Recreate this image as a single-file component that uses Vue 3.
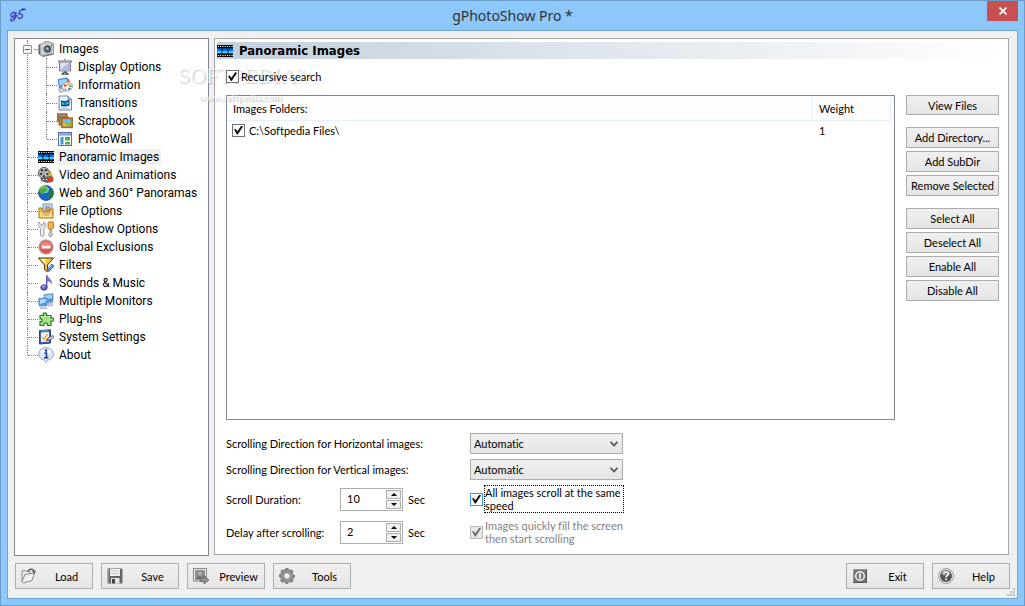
<script setup>
import { ref } from 'vue'

const children = [
  { icon: 'screen', label: 'Display Options' },
  { icon: 'palette', label: 'Information' },
  { icon: 'transitions', label: 'Transitions' },
  { icon: 'scrapbook', label: 'Scrapbook' },
  { icon: 'photowall', label: 'PhotoWall' }
]

const sections = [
  { icon: 'camera', label: 'Images', children },
  { icon: 'film', label: 'Panoramic Images', selected: true },
  { icon: 'reel', label: 'Video and Animations' },
  { icon: 'globe', label: 'Web and 360° Panoramas' },
  { icon: 'folder', label: 'File Options' },
  { icon: 'wrench', label: 'Slideshow Options' },
  { icon: 'stop', label: 'Global Exclusions' },
  { icon: 'funnel', label: 'Filters' },
  { icon: 'note', label: 'Sounds & Music' },
  { icon: 'monitors', label: 'Multiple Monitors' },
  { icon: 'puzzle', label: 'Plug-Ins' },
  { icon: 'settings', label: 'System Settings' },
  { icon: 'about', label: 'About' }
]

const actionGroups = [
  ['View Files'],
  ['Add Directory...', 'Add SubDir', 'Remove Selected'],
  ['Select All', 'Deselect All', 'Enable All', 'Disable All']
]

const fileButtons = [
  { icon: 'load', label: 'Load' },
  { icon: 'save', label: 'Save' },
  { icon: 'preview', label: 'Preview' },
  { icon: 'gear', label: 'Tools' }
]
const exitButtons = [
  { icon: 'exit', label: 'Exit' },
  { icon: 'help', label: 'Help' }
]

const folders = ref([{ path: 'C:\\Softpedia Files\\', weight: 1, on: true }])
const recursive = ref(true)
const sameSpeed = ref(true)
const fill = ref(true)
const duration = ref(10)
const delay = ref(2)

const icons = {
  camera: `<path d="M0.5 4 L2 3 L2.5 14.5 L0.5 12.500Z" fill="#555b63"/><path d="M2 3.500 L5 2.500 L6.500 0.800 L11 0.500 L12 2 L15.500 2.200 L15.500 12.500 L4 15 L2 14Z" fill="#c9ccd1" stroke="#7a7f86" stroke-width=".8"/><path d="M4 15 L15.500 12.500 V13.700 L5 16Z" fill="#777"/><path d="M3 5 L15 3.500" stroke="#f4f5f7"/><circle cx="9.500" cy="8" r="4.200" fill="#8d929a"/><circle cx="9.500" cy="8" r="3.200" fill="#3d434d"/><circle cx="9.500" cy="8" r="1.900" fill="#77879c"/><circle cx="8.700" cy="7.200" r=".8" fill="#e8eef8"/><rect x="13" y="3.500" width="1.500" height="1.500" fill="#596070"/>`,
  screen: `<path d="M8 12 V14 M4.500 15.500 L8 13 L11.500 15.500" stroke="#555" stroke-width="1.600" fill="none"/><path d="M2.500 2.500 H13.500 V12 H2.500Z" fill="#dcdcf4" stroke="#77779b"/><path d="M3 11 L13 3 V11.500 H3Z" fill="#b7b8df"/><rect x="1" y="1" width="14" height="2.400" rx="1" fill="#8b8b93"/><path d="M2 1.700 H14" stroke="#dcdce2" stroke-width=".7"/><path d="M7 .2 H9" stroke="#666"/><path d="M6 15.400 H10" stroke="#666"/>`,
  palette: `<path d="M1 2.500 L10 .8 L12.500 9 L2.500 11Z" fill="#58a5ea" stroke="#3573ba" stroke-width=".8"/><path d="M2 3.300 L9.300 1.900 L10 5 L3 9Z" fill="#9bd4fb"/><path d="M1.500 12 L8 11 L9 14 L3 15.500Z" fill="#ced3da" stroke="#8b939f" stroke-width=".7"/><path d="M5 11 C4 7 9 4 13 5.500 C17 7 16 12 12 14 C10 15 9 13.500 9.500 12.500 C10 11.500 6 13.500 5 11Z" fill="#f4f1ee" stroke="#777d8a" stroke-width=".7"/><circle cx="8" cy="8.500" r="1.200" fill="#e8362b"/><circle cx="11" cy="7.200" r="1.200" fill="#f39b20"/><circle cx="13.500" cy="9" r="1.200" fill="#48a846"/><circle cx="12.300" cy="11.800" r="1.100" fill="#335bcb"/><path d="M11 2 L12.500 4.500" stroke="#d93d36" stroke-width="1.300"/>`,
  transitions: `<path d="M2 1 H11 L14.500 4.500 V15 H2Z" fill="#e9f2fc" stroke="#7285a5"/><path d="M11 1 V4.500 H14.500Z" fill="#a9bdd9" stroke="#7285a5" stroke-width=".7"/><path d="M4 5.500 L8 6.200 L12.500 4.800 V10.500 L8 11.500 L4 11Z" fill="#113d6d"/><path d="M4.500 7 L7.500 7.500 V10 L4.500 9.500ZM8.500 7.300 L11.700 6.400 V9 L8.500 10Z" fill="#2abaf0"/><path d="M4 13 H12" stroke="#aac0dd"/>`,
  scrapbook: `<rect x=".8" y="1" width="9" height="7" fill="#55a6dc" stroke="#b5611d" stroke-width="1.500"/><rect x="2" y="4" width="9" height="8" fill="#88a84c" stroke="#a65818"/><rect x="5" y="5.500" width="10" height="8.500" fill="#65bdf0" stroke="#c8782a" stroke-width="1.700"/><path d="M6 11 L9 8.500 L11 10.500 L14 8 V13 H6Z" fill="#97bc31"/><path d="M6 11 L8 11 L11 13 H6Z" fill="#f3c431"/><path d="M4.200 4.700 H15.800 V14.800 H4.200Z" fill="none" stroke="#6f3910" stroke-width=".5"/>`,
  photowall: `<rect x="1.500" y="1.500" width="13" height="13" fill="#f5f8fd" stroke="#5772a3"/><rect x="2" y="2" width="12" height="2.500" fill="#719dd6"/><path d="M2.500 2.800 H13" stroke="#b7d1f2" stroke-width=".7"/><rect x="3.500" y="6" width="3" height="7.500" fill="#459ac8"/><rect x="8" y="6" width="5" height="3.500" fill="#57ae49"/><rect x="8" y="11" width="5" height="2.500" fill="#57ae49"/>`,
  film: `<rect x="0" y="2" width="16" height="12" fill="#050505"/><path d="M.8 3.500 H16 M.8 12.500 H16" stroke="#fff" stroke-width="1.200" stroke-dasharray="1.100 1.200"/><rect x="0" y="5.300" width="4.500" height="5.500" fill="#0873e6"/><rect x="5.500" y="5.300" width="5" height="5.500" fill="#0873e6"/><rect x="11.500" y="5.300" width="4.500" height="5.500" fill="#0873e6"/><path d="M0 9 H4.500 M5.500 9 H10.500 M11.500 9 H16" stroke="#49c2ff" stroke-width="2.200"/><path d="M0 5.700 H4.500 M5.500 5.700 H10.500 M11.500 5.700 H16" stroke="#09439e"/>`,
  reel: `<circle cx="6" cy="6" r="5.500" fill="#d2d2d2" stroke="#4c4c4c"/><g fill="#3d3d3d"><circle cx="4" cy="3.300" r="1.400"/><circle cx="8" cy="3.300" r="1.400"/><circle cx="3" cy="7" r="1.400"/><circle cx="6" cy="9.300" r="1.400"/><circle cx="9.300" cy="7" r="1.300"/><circle cx="6" cy="6" r=".8"/></g><path d="M3 11 C6 13 9 9 12 10 L15 14 C11 16 7 16 3 13Z" fill="#6d6d6d" stroke="#333" stroke-width=".6"/><path d="M5 13 L6 12 M8 13 L9 12" stroke="#eee"/><path d="M10 8 L12 4 L14 9 L11 11Z" fill="#f1c32a" stroke="#8c6717" stroke-width=".6"/><circle cx="12.500" cy="12" r="3" fill="#dd3a24"/><path d="M10.500 9 H14 V11 H10Z" fill="#39973b"/>`,
  globe: `<circle cx="8" cy="8" r="7.500" fill="#1765c5" stroke="#154684" stroke-width=".7"/><ellipse cx="6.500" cy="4.800" rx="5" ry="3.500" fill="#75bdf5"/><path d="M1 5 C3 1 8 0 9.500 1.500 L8 4 L10 5.500 L6.500 7 L5 9.500 L3.500 9 L2 8Z" fill="#4dab37"/><path d="M11 4 C13 2.500 15 6 15.300 8 C15 12 13 14 11.500 14 L10.500 11 L12.500 9 L10.500 7Z" fill="#287e25"/><path d="M3 4 C4.500 2 7 1.500 8 2" stroke="#b5e58b" fill="none"/>`,
  folder: `<path d="M5 1 H14 V9 H5Z" fill="#fff" stroke="#6483a5"/><path d="M6.500 2.500 H12.500 V8 H6.500Z" fill="#66b3f1"/><circle cx="9.500" cy="5" r="1.700" fill="#ed854b"/><path d="M1 5 H4 V8 H12 V6 H15 V15 H1Z" fill="#f4c755" stroke="#af7415"/><path d="M2.500 10 H13.500 V14 H2.500Z" fill="#ffe69c"/><path d="M5 9.500 H11 V12 H5Z" fill="#fff5ce" stroke="#bf8926" stroke-width=".8"/><path d="M6.500 11 H9.500" stroke="#986821" stroke-width=".7"/>`,
  wrench: `<path d="M1 1 L3 4 H5 L6 1 C9 3 8 6 6 7.500 V14 C5.500 16 3 16 2.500 14 V7.500 C0 6 -1 3 1 1Z" fill="#e0e0e0" stroke="#8c8c8c" stroke-width=".8"/><path d="M4 7 V14" stroke="#fff"/><path d="M10 1.500 C10 .5 15.500 .5 15.500 1.500 V7 L13.500 8.500 H11.500 L10 7Z" fill="#f2a33f" stroke="#bd6b1d" stroke-width=".8"/><path d="M11.500 2 V7 M13.500 2 V7" stroke="#ffd190" stroke-width=".7"/><path d="M12 8.500 H13.500 V12 L14.500 13 L13.500 15.500 H11.500 L10.500 13 L12 12Z" fill="#d7d7d7" stroke="#777" stroke-width=".7"/>`,
  stop: `<circle cx="8" cy="8" r="7" fill="#e2554c" stroke="#b9b4b7" stroke-width="1.400"/><circle cx="8" cy="8" r="6.300" fill="none" stroke="#d0554c" stroke-width=".7"/><path d="M2.500 7 C3 1 13 1 13.500 7Z" fill="#f0837b"/><rect x="3.500" y="6.700" width="9" height="2.800" rx=".5" fill="#fff"/>`,
  funnel: `<path d="M.5 1 H15.500 L9.500 8 V14.500 L6.500 12.500 V8Z" fill="#f6c63b" stroke="#3d3213"/><path d="M2.500 2 H8 L7.500 7Z" fill="#fff1a3"/><path d="M9 12 L14 7 L16 9 L11 14.500Z" fill="#3e8fe0" stroke="#214d8a" stroke-width=".7"/><path d="M9 12 L11 14.500 L8 15.500Z" fill="#e94532"/><path d="M10.500 11.500 L14 8" stroke="#c1e2ff"/>`,
  note: `<path d="M8.700 2 V12" stroke="#4848ae" stroke-width="1.300"/><path d="M8 .5 H9.500 C10 4 14 4 13.500 8.500 C12.500 6.300 10 6 9.500 6Z" fill="#7776d4" stroke="#5050b0" stroke-width=".5"/><ellipse cx="6" cy="12.500" rx="3.300" ry="2.800" fill="#5c5bc4" stroke="#39398f" stroke-width=".7"/><ellipse cx="5.500" cy="11.500" rx="1.800" ry=".9" fill="#adb0f1"/>`,
  monitors: `<path d="M6 1.500 L15 .8 V9 L7 10Z" fill="#4995e6" stroke="#8095b5" stroke-width=".9"/><path d="M7 2.500 L14 1.800 V5 L7 7Z" fill="#a3d4ff"/><path d="M10 10 L13.500 9.500 L15 12.500 L10 13Z" fill="#cbd0dc" stroke="#8d96ac" stroke-width=".6"/><path d="M.8 5.500 L9 4.700 V12.500 L1 13Z" fill="#4c9be9" stroke="#788caf" stroke-width=".9"/><path d="M2 6.500 L8 6 V9 L2 11Z" fill="#aedcff"/><path d="M3.500 13 H7 L9 15.500 H2Z" fill="#dce0e9" stroke="#8a94aa" stroke-width=".6"/>`,
  puzzle: `<path d="M2 4.500 H5.500 C3.500 1 10 1 8.500 4.500 H13 V7 C16.500 5.500 16.500 11.500 13 10 V14.500 H9.500 C10.500 11 5 11 6 14.500 H2 V10.500 C5 11.500 5 7 2 8Z" fill="#a5e287" stroke="#27801e" stroke-width="1.200"/><path d="M3 5.500 H8 M9.500 5.500 H12" stroke="#d7f8c0"/>`,
  settings: `<path d="M1.500 1.500 L12.500 .8 V14 L1.500 15Z" fill="#3468ab" stroke="#214575"/><path d="M3 3.500 L11 3 V12.500 L3 13Z" fill="#f4f6fb"/><path d="M3.500 1.800 H10" stroke="#79a8dd"/><path d="M4.500 8 L6 10.500 L9.500 5" fill="none" stroke="#e5b83d" stroke-width="1.500"/><path d="M8 11 L11 8 L15 6.500 L15.500 9 L11 11.500Z" fill="#9ba6b9" stroke="#4a566d" stroke-width=".7"/><path d="M8 11.800 L10.500 9.500" stroke="#d34b32" stroke-width="1.200"/><path d="M11 9.800 L15 8" stroke="#fff" stroke-width=".7"/>`,
  about: `<path d="M8 .7 C17 .7 17.500 12 10.500 12.800 L8 15.500 L6 12.800 C-1.500 12 -1 .7 8 .7Z" fill="#dce8f5" stroke="#7695bb" stroke-width=".8"/><path d="M2.500 5 C4 1 12 1 13.500 5 C10 7 6 7 2.500 5Z" fill="#fff"/><circle cx="8" cy="3.500" r="1.300" fill="#123b8c"/><path d="M6.300 6 H8.500 V10.500 M6 10.800 H10.300" fill="none" stroke="#123b8c" stroke-width="1.500"/>`,
  load: `<path d="M1 13.500 V3 L3 2 L5 3.500 H9 V6" fill="#e8e8e8" stroke="#888"/><path d="M1 13.500 L4 6.500 L13.500 5 L11 12.500 L2.500 15Z" fill="#f0f0f0" stroke="#888"/><path d="M7 3 C9 .5 12 1 13 3" fill="none" stroke="#555" stroke-width="1.400"/><path d="M11 3 L15 2.500 L13.300 6Z" fill="#555"/>`,
  save: `<path d="M.5 .5 H14.500 L15.500 1.500 V15.500 H.5Z" fill="#666"/><rect x="3" y="1" width="10" height="7" fill="#f0f0f0"/><path d="M4 3 H12 M4 5.500 H12" stroke="#c5c5c5"/><rect x="4" y="10" width="8.500" height="5.500" fill="#e5e5e5"/><rect x="5" y="11" width="3" height="4.500" fill="#444"/><path d="M1.500 1 V15" stroke="#999"/>`,
  preview: `<rect x=".5" y=".5" width="13" height="12.500" fill="#e8e8e8" stroke="#8b8b8b"/><rect x="2" y="2" width="10" height="9.500" fill="#969696"/><circle cx="7" cy="5.500" r="3" fill="#ababab" stroke="#777"/><path d="M2 11 L5 8 L9 10 L12 7 V11.500 H2Z" fill="#707070"/><path d="M7 10 H11 V7.500 L16 12 L11 16 V13.500 H7Z" fill="#909090" stroke="#555" stroke-width=".7"/>`,
  gear: `<path d="M6.500 0 H9.500 L10 2 L12.500 1.300 L14.500 3.500 L13.700 6 L16 7 V9.500 L14 10.500 L14.500 12.800 L12.500 14.800 L10 14 L9 16 H6.500 L5.500 14 L3 14.700 L1.200 12.500 L2 10.300 L0 9 V6.500 L2 5.500 L1.500 3 L3.500 1.300 L5.500 2Z" fill="#858585"/><circle cx="8" cy="8" r="4.500" fill="none" stroke="#aaa"/><circle cx="8" cy="8" r="3.300" fill="#f0f0f0" stroke="#6f6f6f" stroke-width=".8"/>`,
  exit: `<rect x="1" y="1" width="14" height="14" fill="#747474"/><path d="M1.500 14 V1.500 H14" fill="none" stroke="#999"/><path d="M1 14.500 H14.500 V2" fill="none" stroke="#555"/><circle cx="8" cy="8" r="4.300" fill="none" stroke="#f5f5f5" stroke-width="1.500"/><path d="M8 5.500 V10.500" stroke="#fff" stroke-width="1.700"/>`,
  help: `<circle cx="8" cy="8" r="7.500" fill="#eee" stroke="#888" stroke-width=".8"/><circle cx="8" cy="8" r="6" fill="#555"/><path d="M3 6 C4 1.500 12 1.500 13 6 C10 8 6 8 3 6Z" fill="#828282"/><path d="M5.700 6.300 C5.700 3 10.700 3.300 10.300 6 C10 7.700 8 7.300 8 9.500" fill="none" stroke="#fff" stroke-width="1.600"/><rect x="7.200" y="10.600" width="1.700" height="1.700" fill="#fff"/>`
}
</script>

<template>
  <div class="window">
    <header class="titlebar">
      <svg class="logo" viewBox="0 0 18 16" aria-hidden="true">
        <path d="M7 6 C4 4 0 8 2.500 9.500 C5 10 6 7 7 6 C7 9 6 14 3 14 C1 14 1 12 3.500 11.200 L9 8.500 M16.500 2.500 L11 3.500 L10 7 C14 6 14.500 10 12 11 C10.500 12 8.500 11 9.500 10 M12 3.500 C13.500 1.500 15 1.500 16.500 3" fill="none" stroke="#3b37b5" stroke-width="1.200" />
      </svg>
      <h1>gPhotoShow Pro *</h1>
      <button class="close" aria-label="Close">
        <svg viewBox="0 0 8 8"><path d="M.5 .5 L7.500 7.500 M7.500 .5 L.5 7.500" stroke="#fff" stroke-width="1.700" /></svg>
      </button>
    </header>

    <div class="client">
      <div class="body">
        <nav class="tree">
          <ul class="roots">
            <li v-for="s in sections" :key="s.label">
              <a href="#" class="node" :class="{ parent: s.children }">
                <span v-if="s.children" class="expander"></span>
                <svg class="icon" viewBox="0 0 16 16" aria-hidden="true" v-html="icons[s.icon]"></svg>
                <span class="text" :class="{ selected: s.selected }">{{ s.label }}</span>
              </a>
              <ul v-if="s.children" class="leaves">
                <li v-for="c in s.children" :key="c.label">
                  <a href="#" class="node">
                    <svg class="icon" viewBox="0 0 16 16" aria-hidden="true" v-html="icons[c.icon]"></svg>
                    <span class="text">{{ c.label }}</span>
                  </a>
                </li>
              </ul>
            </li>
          </ul>
        </nav>

        <main class="panel">
          <h2 class="heading">
            <svg class="icon" viewBox="0 0 16 16" aria-hidden="true" v-html="icons.film"></svg>
            Panoramic Images
          </h2>
          <div class="content">
            <label class="check recursive"><input v-model="recursive" type="checkbox" />Recursive search</label>
            <div class="upper">
              <div class="list">
                <table>
                  <thead>
                    <tr><th>Images Folders:</th><th class="weight">Weight</th></tr>
                  </thead>
                  <tbody>
                    <tr v-for="f in folders" :key="f.path">
                      <td><label class="check"><input v-model="f.on" type="checkbox" />{{ f.path }}</label></td>
                      <td class="weight">{{ f.weight }}</td>
                    </tr>
                  </tbody>
                </table>
              </div>
              <div class="actions">
                <div v-for="(g, i) in actionGroups" :key="i" class="group">
                  <button v-for="b in g" :key="b" class="btn">{{ b }}</button>
                </div>
              </div>
            </div>

            <form class="options" @submit.prevent>
              <label for="dir-h">Scrolling Direction for Horizontal images:</label>
              <div class="select">
                <select id="dir-h"><option>Automatic</option></select>
                <svg viewBox="0 0 8 6"><path d="M.5 .8 L4 4.500 L7.500 .8" fill="none" stroke="#555" stroke-width="1.800" /></svg>
              </div>
              <label for="dir-v">Scrolling Direction for Vertical images:</label>
              <div class="select">
                <select id="dir-v"><option>Automatic</option></select>
                <svg viewBox="0 0 8 6"><path d="M.5 .8 L4 4.500 L7.500 .8" fill="none" stroke="#555" stroke-width="1.800" /></svg>
              </div>
              <div class="row">
                <label for="duration">Scroll Duration:</label>
                <div class="spin">
                  <input id="duration" v-model="duration" type="text" />
                  <div class="steps">
                    <button aria-label="Increase duration" @click="duration++"><i class="up"></i></button>
                    <button aria-label="Decrease duration" @click="duration--"><i class="down"></i></button>
                  </div>
                </div>
                <span>Sec</span>
              </div>
              <label class="check wrap focus"><input v-model="sameSpeed" type="checkbox" /><span>All images scroll at the same speed</span></label>
              <div class="row">
                <label for="delay">Delay after scrolling:</label>
                <div class="spin">
                  <input id="delay" v-model="delay" type="text" />
                  <div class="steps">
                    <button aria-label="Increase delay" @click="delay++"><i class="up"></i></button>
                    <button aria-label="Decrease delay" @click="delay--"><i class="down"></i></button>
                  </div>
                </div>
                <span>Sec</span>
              </div>
              <label class="check wrap off"><input v-model="fill" type="checkbox" disabled /><span>Images quickly fill the screen then start scrolling</span></label>
            </form>
          </div>
        </main>
      </div>

      <footer class="footer">
        <button v-for="b in fileButtons" :key="b.label" class="btn big">
          <svg class="icon" viewBox="0 0 16 16" aria-hidden="true" v-html="icons[b.icon]"></svg>
          <span>{{ b.label }}</span>
        </button>
        <div class="spacer"></div>
        <button v-for="b in exitButtons" :key="b.label" class="btn big">
          <svg class="icon" viewBox="0 0 16 16" aria-hidden="true" v-html="icons[b.icon]"></svg>
          <span>{{ b.label }}</span>
        </button>
      </footer>
      <svg class="grip" viewBox="0 0 8 8" aria-hidden="true">
        <path d="M6 0h2v2h-2zM3 3h2v2h-2zM6 3h2v2h-2zM0 6h2v2h-2zM3 6h2v2h-2zM6 6h2v2h-2z" fill="#bcbcbc" />
      </svg>
    </div>

    <div class="watermark" aria-hidden="true">
      <div class="brand">SOFTPEDIA<sup>™</sup></div>
      <div class="site">www.softpedia.com</div>
    </div>
  </div>
</template>

<style>
body {
  margin: 0;
}
</style>

<style scoped>
* {
  box-sizing: border-box;
}
.window {
  position: relative;
  display: flex;
  flex-direction: column;
  min-height: 100vh;
  padding: 0 6px 6px;
  border: 1px solid #6b9bc8;
  background: #8ec8fa;
  color: #000;
  font: 11px/13px Lato, sans-serif;
  font-variant-ligatures: none;
}
button,
input,
select {
  font: inherit;
  font-variant-ligatures: none;
  color: inherit;
  margin: 0;
}
.icon {
  flex: none;
  width: 16px;
  height: 16px;
}
.titlebar {
  display: grid;
  grid-template-columns: 1fr auto 1fr;
  height: 29px;
}
.logo {
  width: 18px;
  height: 16px;
  margin: 6px 0 0 2px;
}
h1 {
  margin: 0;
  font: 14px/29px "Noto Sans", sans-serif;
  color: #2b3238;
}
.close {
  display: grid;
  place-items: center;
  justify-self: end;
  width: 31px;
  height: 20px;
  padding: 0;
  border: 0;
  background: #c75050;
}
.close svg {
  width: 8px;
  height: 8px;
}
.client {
  position: relative;
  flex: 1;
  display: flex;
  flex-direction: column;
  padding: 7px 7px 9px 6px;
  border: 1px solid #6ea4d3;
  background: #f0f0f0;
}
.body {
  flex: 1;
  display: flex;
  gap: 5px;
  padding-right: 1px;
}
.tree {
  width: 195px;
  padding: 1px 0;
  border: 1px solid #828790;
  background: #fff;
  font: 12px/16px Roboto, sans-serif;
}
ul {
  list-style: none;
  margin: 0;
  padding: 0;
}
.roots > li {
  margin-left: 12px;
  border-left: 1px dotted #808080;
}
.roots > li:last-child,
.leaves > li:last-child {
  height: 9px;
}
.node {
  display: flex;
  align-items: center;
  height: 18px;
  color: #000;
  text-decoration: none;
  white-space: nowrap;
}
.node::before {
  content: "";
  flex: none;
  width: 10px;
  border-top: 1px dotted #808080;
}
.parent::before {
  width: 4px;
}
.expander {
  order: -1;
  display: grid;
  place-items: center;
  width: 9px;
  height: 9px;
  margin-left: -5px;
  margin-right: 2px;
  border: 1px solid #919191;
  border-radius: 1px;
  background: #f5f5f5;
}
.expander::before {
  content: "";
  width: 5px;
  height: 1px;
  background: #3c5dab;
}
.leaves {
  margin-left: 18px;
  padding-bottom: 9px;
}
.leaves > li {
  border-left: 1px dotted #808080;
}
.text {
  margin-left: 3px;
  padding: 0 2px;
}
.selected {
  background: #f0f0f0;
}
.panel {
  flex: 1;
  display: flex;
  flex-direction: column;
  margin-bottom: 1px;
  padding: 3px 3px 3px 2px;
  border: 1px solid #a5a5a5;
  background: #fff;
}
.heading {
  display: flex;
  align-items: center;
  gap: 6px;
  height: 17px;
  margin: 0;
  background: linear-gradient(90deg, #c3cfdc, #fff);
  font: bold 13px/17px "DejaVu Sans Condensed", "DejaVu Sans", sans-serif;
}
.content {
  flex: 1;
  display: flex;
  flex-direction: column;
  padding: 11px 6px 5px 9px;
}
.check {
  display: flex;
  align-items: center;
  gap: 2px;
}
.check input {
  appearance: none;
  flex: none;
  display: grid;
  place-items: center;
  width: 13px;
  height: 13px;
  border: 1px solid #707070;
  background: #fff;
}
.check input:checked::before {
  content: "";
  width: 9px;
  height: 9px;
  background: #111;
  clip-path: polygon(0 45%, 18% 40%, 38% 65%, 82% 0, 100% 12%, 42% 100%, 32% 100%);
}
.recursive {
  position: relative;
  z-index: 1;
  align-self: flex-start;
  margin-bottom: 12px;
}
.upper {
  flex: 1;
  display: flex;
  gap: 11px;
}
.list {
  flex: 1;
  padding: 1px 3px 0 0;
  border: 1px solid #828790;
}
table {
  width: 100%;
  border-collapse: separate;
  border-spacing: 0;
}
th {
  height: 24px;
  padding: 0 6px;
  border-right: 1px solid #e5effb;
  border-bottom: 1px solid #e5effb;
  background: #fdfdfe;
  font-weight: normal;
  text-align: left;
}
.weight {
  width: 78px;
  padding: 0 6px;
}
td {
  height: 18px;
  padding: 0 5px;
}
td .check {
  gap: 4px;
}
.actions {
  display: flex;
  flex-direction: column;
  gap: 12px;
  width: 93px;
}
.group {
  display: flex;
  flex-direction: column;
  gap: 3px;
}
.btn {
  height: 21px;
  padding: 0;
  border: 1px solid #acacac;
  background: linear-gradient(#f0f0f0, #e5e5e5);
  white-space: nowrap;
}
.group:first-child .btn {
  height: 20px;
}
.options {
  display: grid;
  grid-template-columns: 244px 153px;
  grid-template-rows: 21px 21px 28px 28px;
  gap: 5px 0;
  align-items: center;
  margin-top: 13px;
}
.select {
  display: grid;
  align-items: center;
}
.select select,
.select svg {
  grid-area: 1 / 1;
}
.select select {
  appearance: none;
  height: 21px;
  padding: 0 3px;
  border: 1px solid #acacac;
  border-radius: 0;
  background: linear-gradient(#f0f0f0, #e5e5e5);
}
.select svg {
  justify-self: end;
  width: 8px;
  height: 6px;
  margin-right: 5px;
  pointer-events: none;
}
.row {
  display: flex;
  align-items: center;
}
.row label {
  width: 114px;
}
.spin {
  display: flex;
  width: 63px;
  height: 23px;
  margin-right: 5px;
  padding: 1px;
  border: 1px solid #abadb3;
}
.spin input {
  flex: 1;
  min-width: 0;
  padding: 0 5px 2px;
  border: 0;
  background: none;
}
.steps {
  display: flex;
  flex-direction: column;
  gap: 1px;
  width: 15px;
}
.steps button {
  flex: 1;
  display: grid;
  place-items: center;
  padding: 0;
  border: 1px solid #acacac;
  background: #f0f0f0;
}
.steps i {
  border: 3px solid transparent;
}
.steps .up {
  border-top: 0;
  border-bottom-color: #000;
}
.steps .down {
  border-bottom: 0;
  border-top-color: #000;
}
.wrap span {
  flex: 1;
}
.focus span {
  outline: 1px dotted #000;
}
.focus input {
  border-color: #3399ff;
}
.off {
  color: #838383;
}
.check.off input {
  border-color: #bcbcbc;
  background: #e6e6e6;
}
.check.off input::before {
  background: #707070;
}
.footer {
  display: flex;
  gap: 8px;
  margin-top: 7px;
  padding-left: 1px;
}
.spacer {
  flex: 1;
}
.big {
  display: flex;
  align-items: center;
  width: 78px;
  height: 26px;
  padding: 0 5px;
}
.big span {
  flex: 1;
  padding-left: 9px;
  text-align: center;
}
.grip {
  position: absolute;
  right: 2px;
  bottom: 2px;
  width: 8px;
  height: 8px;
}
.watermark {
  position: absolute;
  left: 177px;
  top: 60px;
  color: rgba(255, 255, 255, 0.7);
  text-shadow: 1px 1px 1px rgba(120, 120, 120, 0.4);
  pointer-events: none;
}
.brand {
  font: 22px/30px "Liberation Serif", serif;
}
.brand sup {
  font-size: 9px;
  line-height: 9px;
}
.site {
  padding-left: 21px;
  font: bold 10px/14px "Liberation Serif", serif;
}
</style>
